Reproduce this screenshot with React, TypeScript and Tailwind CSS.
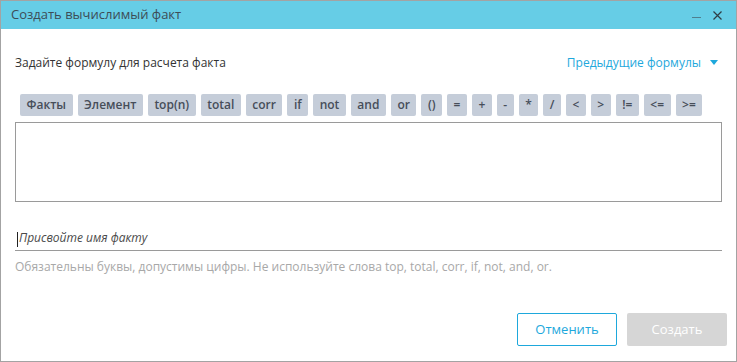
import React from "react";

const ops = [
  "Факты",
  "Элемент",
  "top(n)",
  "total",
  "corr",
  "if",
  "not",
  "and",
  "or",
  "()",
  "=",
  "+",
  "-",
  "*",
  "/",
  "<",
  ">",
  "!=",
  "<=",
  ">=",
];

const App: React.FC = () => {
  return (
    <div className="w-[737px] h-[362px] bg-white font-['Open_Sans',sans-serif]">
      <div className="w-full h-full border border-[#a3a3a3] flex flex-col">
        {/* header */}
        <div className="h-[28px] bg-[#66cde6] flex items-center justify-between pl-[10px] pr-[14px]">
          <span className="text-[13px] text-[#3d4c57]">Создать вычислимый факт</span>
          <div className="flex items-center gap-[12px]">
            <span className="block w-[9px] h-[1.5px] bg-[#4f7f8f] mt-[5px]" />
            <svg width="9" height="9" viewBox="0 0 9 9">
              <path d="M0.5 0.5L8.5 8.5M8.5 0.5L0.5 8.5" stroke="#2f3d45" strokeWidth="1.2" />
            </svg>
          </div>
        </div>

        <div className="flex-1 flex flex-col px-[14px]">
          <div className="flex items-center justify-between mt-[25px] h-[18px]">
            <span className="text-[12px] text-[#333]">Задайте формулу для расчета факта</span>
            <div className="flex items-center gap-[9px] pr-[4px] text-[#1ea8dc]">
              <span className="text-[12px]">Предыдущие формулы</span>
              <svg width="8" height="6" viewBox="0 0 8 6">
                <path d="M0 0H8L4 5Z" fill="#1ea8dc" />
              </svg>
            </div>
          </div>

          <div className="flex flex-nowrap gap-[5px] mt-[22px] pl-[5px]">
            {ops.map((o) => (
              <span
                key={o}
                className="h-[22px] px-[6.5px] rounded-[2px] bg-[#c5cdd9] text-[12px] font-semibold text-[#474e59] flex items-center justify-center whitespace-nowrap"
              >
                {o}
              </span>
            ))}
          </div>

          <div className="mt-[6px] w-[707px] h-[80px] border border-[#9a9a9a]" />

          <div className="mt-[27px] w-[707px] border-b border-[#9a9a9a] h-[22px] flex items-center">
            <span className="block w-[1px] h-[15px] bg-[#222] ml-[2px]" />
            <span className="text-[12px] italic text-[#4a4a4a] ml-[1px] -mt-[3px]">Присвойте имя факту</span>
          </div>

          <div className="mt-[7px] text-[12px] text-[#a8a8a8]">
            Обязательны буквы, допустимы цифры. Не используйте слова top, total, corr, if, not, and, or.
          </div>

          <div className="mt-auto mb-[15px] -mr-[5px] flex justify-end gap-[10px]">
            <button className="w-[100px] h-[33px] rounded-[2px] border border-[#1ea8dc] text-[13px] text-[#1ea8dc] bg-white">
              Отменить
            </button>
            <button className="w-[100px] h-[33px] rounded-[2px] bg-[#d6d6d6] text-[13px] text-white">
              Создать
            </button>
          </div>
        </div>
      </div>
    </div>
  );
};

export default App;
